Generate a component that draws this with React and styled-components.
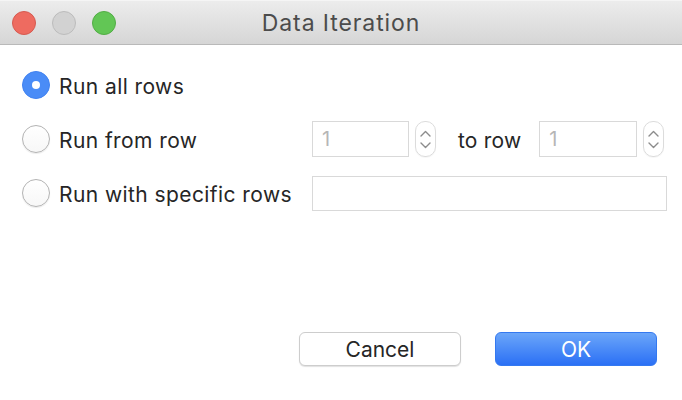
import React from "react";
import styled, { createGlobalStyle } from "styled-components";

const Global = createGlobalStyle`
  html, body { margin: 0; padding: 0; background: #ffffff; }
  body { font-family: "Inter", "Liberation Sans", Arial, sans-serif; }
  * { box-sizing: border-box; }
`;

const Window = styled.div`
  width: 682px;
  height: 400px;
  display: flex;
  flex-direction: column;
  background: #ffffff;
  overflow: hidden;
`;

const TitleBar = styled.div`
  position: relative;
  height: 45px;
  flex: none;
  display: flex;
  align-items: center;
  justify-content: center;
  background: linear-gradient(#ececec, #d6d6d6);
  border-top: 1px solid #f5f5f5;
  border-bottom: 1px solid #b9b9b9;
`;

const Lights = styled.div`
  position: absolute;
  left: 12px;
  top: 10px;
  display: flex;
  gap: 16px;
`;

const Light = styled.span`
  width: 24px;
  height: 24px;
  border-radius: 50%;
  background: ${(p) => p.$bg};
  border: 1px solid ${(p) => p.$bd};
`;

const Title = styled.div`
  font-size: 23px;
  color: #4c4c4c;
  letter-spacing: 0.9px;
  margin-top: 1px;
`;

const Content = styled.div`
  padding: 13px 0 0 22px;
  display: flex;
  flex-direction: column;
`;

const Row = styled.div`
  height: 54px;
  display: flex;
  align-items: center;
`;

const Radio = styled.span`
  width: 28px;
  height: 28px;
  flex: none;
  border-radius: 50%;
  display: flex;
  align-items: center;
  justify-content: center;
  ${(p) =>
    p.$checked
      ? `background: #4a8cf7; border: 1px solid #4182f0;`
      : `background: linear-gradient(#ffffff, #f7f7f7); border: 1px solid #b3b3b3; box-shadow: 0 1px 1px rgba(0,0,0,0.08);`}
  &::after {
    content: "";
    display: ${(p) => (p.$checked ? "block" : "none")};
    width: 8px;
    height: 8px;
    border-radius: 50%;
    background: #ffffff;
  }
`;

const Label = styled.span`
  width: 253px;
  flex: none;
  margin-left: 9px;
  margin-top: 2px;
  font-size: 21px;
  color: #262626;
  letter-spacing: 0.42px;
`;

const Field = styled.div`
  width: ${(p) => p.$w}px;
  height: ${(p) => p.$h}px;
  flex: none;
  border: 1px solid #d9d9d9;
  background: #ffffff;
  display: flex;
  align-items: center;
  padding-left: 9px;
  font-size: 20px;
  color: #b6b6b6;
`;

const Stepper = styled.div`
  width: 21px;
  height: 36px;
  margin-left: 6px;
  flex: none;
  border: 1px solid #dcdcdc;
  border-radius: 10px;
  display: flex;
  flex-direction: column;
  align-items: center;
  justify-content: center;
  gap: 5px;
  box-shadow: 0 1px 1px rgba(0, 0, 0, 0.04);
`;

const ToRow = styled.span`
  margin: 2px 18px 0 22px;
  font-size: 21px;
  color: #262626;
  letter-spacing: 0.2px;
`;

const Footer = styled.div`
  margin-top: auto;
  padding: 0 25px 34px 0;
  display: flex;
  justify-content: flex-end;
  gap: 34px;
`;

const Button = styled.div`
  width: 162px;
  height: 34px;
  border-radius: 6px;
  display: flex;
  align-items: center;
  justify-content: center;
  font-size: 21px;
  padding-top: 1px;
  ${(p) =>
    p.$primary
      ? `background: linear-gradient(#6ba6f9, #2b70f5); color: #ffffff; border: 1px solid #3479f0;`
      : `background: #ffffff; color: #262626; border: 1px solid #cdcdcd; box-shadow: 0 1px 1px rgba(0,0,0,0.12);`}
`;

const Chevron = ({ up }) => (
  <svg width="11" height="7" viewBox="0 0 11 7">
    <path
      d={up ? "M1 6 L5.5 1.5 L10 6" : "M1 1 L5.5 5.5 L10 1"}
      fill="none"
      stroke="#8c8c8c"
      strokeWidth="1.4"
      strokeLinecap="round"
      strokeLinejoin="round"
    />
  </svg>
);

const Spin = () => (
  <Stepper>
    <Chevron up />
    <Chevron />
  </Stepper>
);

export default function App() {
  return (
    <Window>
      <Global />
      <TitleBar>
        <Lights>
          <Light $bg="#ee6b60" $bd="#d65a50" />
          <Light $bg="#d2d2d2" $bd="#bcbcbc" />
          <Light $bg="#62c655" $bd="#52ad45" />
        </Lights>
        <Title>Data Iteration</Title>
      </TitleBar>
      <Content>
        <Row>
          <Radio $checked />
          <Label>Run all rows</Label>
        </Row>
        <Row>
          <Radio />
          <Label>Run from row</Label>
          <Field $w={97} $h={36}>1</Field>
          <Spin />
          <ToRow>to row</ToRow>
          <Field $w={98} $h={36}>1</Field>
          <Spin />
        </Row>
        <Row>
          <Radio />
          <Label>Run with specific rows</Label>
          <Field $w={355} $h={35} />
        </Row>
      </Content>
      <Footer>
        <Button>Cancel</Button>
        <Button $primary>OK</Button>
      </Footer>
    </Window>
  );
}
